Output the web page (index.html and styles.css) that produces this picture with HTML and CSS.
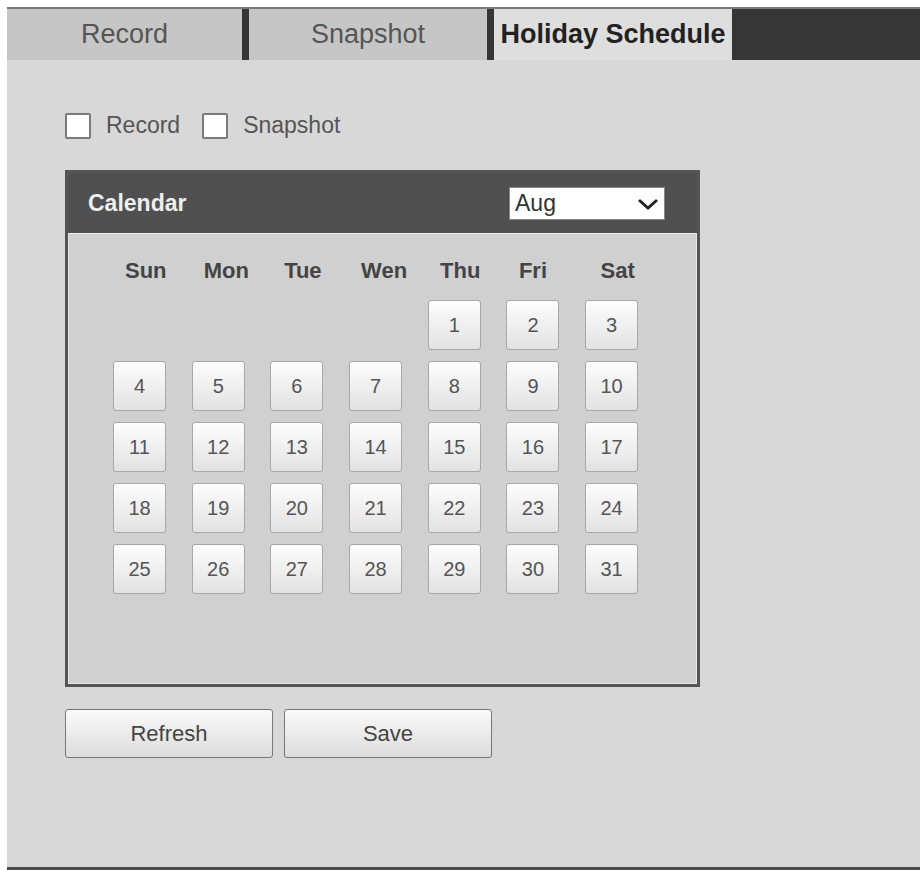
FILE: index.html
```html
<!DOCTYPE html>
<html lang="en">
<head>
    <meta charset="UTF-8">
    <title>Holiday Schedule</title>
    <link rel="stylesheet" href="styles.css">
</head>
<body>

    <div class="panel">
        <div class="tabs">
            <div class="tab">Record</div>
            <div class="tab">Snapshot</div>
            <div class="tab active">Holiday Schedule</div>
        </div>

        <div class="content">
            <div class="options">
                <label class="check"><span class="box"></span>Record</label>
                <label class="check"><span class="box"></span>Snapshot</label>
            </div>

            <div class="calendar">
                <div class="calendar-head">
                    <span class="calendar-title">Calendar</span>
                    <div class="month-select">
                        <span>Aug</span>
                        <svg width="24" height="14" viewBox="0 0 24 14">
                            <polyline points="3,3 12,11 21,3" fill="none" stroke="#222" stroke-width="3"/>
                        </svg>
                    </div>
                </div>
                <div class="calendar-body">
                    <div class="week">
                        <span>Sun</span><span>Mon</span><span>Tue</span><span>Wen</span><span>Thu</span><span>Fri</span><span>Sat</span>
                    </div>
                    <div class="days">
                        <span></span><span></span><span></span><span></span>
                        <button class="day">1</button><button class="day">2</button><button class="day">3</button>
                        <button class="day">4</button><button class="day">5</button><button class="day">6</button><button class="day">7</button>
                        <button class="day">8</button><button class="day">9</button><button class="day">10</button>
                        <button class="day">11</button><button class="day">12</button><button class="day">13</button><button class="day">14</button>
                        <button class="day">15</button><button class="day">16</button><button class="day">17</button>
                        <button class="day">18</button><button class="day">19</button><button class="day">20</button><button class="day">21</button>
                        <button class="day">22</button><button class="day">23</button><button class="day">24</button>
                        <button class="day">25</button><button class="day">26</button><button class="day">27</button><button class="day">28</button>
                        <button class="day">29</button><button class="day">30</button><button class="day">31</button>
                    </div>
                </div>
            </div>

            <div class="actions">
                <button class="btn">Refresh</button>
                <button class="btn">Save</button>
            </div>
        </div>
    </div>

</body>
</html>
```

FILE: styles.css
```css
body {
    margin: 0;
    background-color: #ffffff;
    font-family: 'Liberation Sans', Arial, sans-serif;
}

.panel {
    margin: 7px 3px 0 7px;
    height: 858px;
    background-color: #d8d8d8;
    border-top: 2px solid #7a7a7a;
    border-bottom: 3px solid #4a4a4a;
    display: flex;
    flex-direction: column;
}

/* Tab strip */
.tabs {
    display: flex;
    height: 51px;
    background-color: #363636;
}

.tab {
    width: 235px;
    margin-right: 7px;
    background-color: #c6c6c6;
    color: #555;
    font-size: 27px;
    display: flex;
    align-items: center;
    justify-content: center;
}

.tab:nth-child(2) {
    width: 238px;
}

.tab.active {
    width: 238px;
    margin-right: 0;
    background-color: #dedede;
    color: #222;
    font-weight: bold;
}

.content {
    padding-left: 58px;
}

/* Record / Snapshot checkboxes */
.options {
    display: flex;
    align-items: center;
    margin-top: 52px;
    font-size: 23px;
    color: #555;
}

.check {
    display: flex;
    align-items: center;
    margin-right: 22px;
}

.box {
    width: 22px;
    height: 22px;
    background-color: #fff;
    border: 2px solid #7a7a7a;
    border-radius: 2px;
    margin-right: 15px;
}

/* Calendar box */
.calendar {
    width: 629px;
    margin-top: 31px;
    border: 3px solid #555;
}

.calendar-head {
    height: 60px;
    background-color: #505050;
    display: flex;
    align-items: center;
    justify-content: space-between;
    padding: 0 32px 0 20px;
}

.calendar-title {
    color: #eeeeee;
    font-size: 23px;
    font-weight: bold;
}

.month-select {
    width: 145px;
    height: 31px;
    background-color: #fff;
    border: 1px solid #888;
    display: flex;
    align-items: center;
    justify-content: space-between;
    padding: 0 4px 0 5px;
    font-size: 23px;
    color: #333;
}

.month-select svg {
    margin-top: 1px;
}

.calendar-body {
    height: 449px;
    background-color: #d0d0d0;
    border: 1px solid #e6e6e6;
    border-top-color: #f0f0f0;
    padding-left: 44px;
}

.week,
.days {
    display: grid;
    grid-template-columns: repeat(7, 53px);
    column-gap: 25.7px;
}

.week {
    margin-top: 17px;
    height: 40px;
    align-items: center;
    font-size: 22px;
    font-weight: bold;
    color: #444;
}

.week span {
    text-align: center;
    padding-left: 12px;
}

.week span:nth-child(6) {
    padding-left: 0;
}

.days {
    margin-top: 9px;
    row-gap: 11px;
}

.day {
    height: 50px;
    padding: 0;
    border: 1px solid #a8a8a8;
    border-radius: 3px;
    background: linear-gradient(#fdfdfd, #e2e2e2);
    font-family: inherit;
    font-size: 20px;
    color: #555;
}

/* Refresh / Save */
.actions {
    display: flex;
    gap: 11px;
    margin-top: 22px;
}

.btn {
    width: 208px;
    height: 49px;
    border: 1px solid #777;
    border-radius: 3px;
    background: linear-gradient(#fafafa, #dcdcdc);
    font-family: inherit;
    font-size: 22px;
    color: #444;
}
```
